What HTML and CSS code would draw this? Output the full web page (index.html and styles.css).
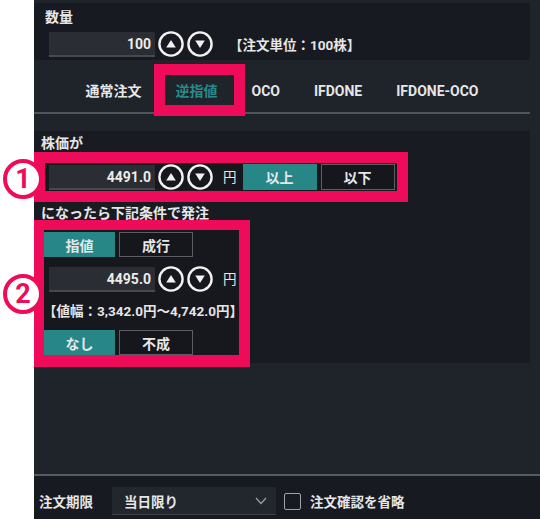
FILE: index.html
```html
<!DOCTYPE html>
<html lang="ja">
<head>
<meta charset="utf-8">
<link rel="stylesheet" href="styles.css">
</head>
<body>
<div class="page">
  <div class="panel">
    <section class="qty">
      <div class="label">数量</div>
      <div class="row qty-row">
        <div class="input">100</div>
        <span class="spin"><svg viewBox="0 0 26 26" width="26" height="26"><circle cx="13" cy="13" r="11.6" fill="none" stroke="#f2f2f2" stroke-width="2.4"/><polygon points="8.2,16.5 17.8,16.5 13,9" fill="#f2f2f2"/></svg></span>
        <span class="spin"><svg viewBox="0 0 26 26" width="26" height="26"><circle cx="13" cy="13" r="11.6" fill="none" stroke="#f2f2f2" stroke-width="2.4"/><polygon points="8.2,9.5 17.8,9.5 13,17" fill="#f2f2f2"/></svg></span>
        <span class="unit">【注文単位：100株】</span>
      </div>
    </section>

    <nav class="tabs">
      <span class="tab">通常注文</span>
      <span class="tab active">逆指値</span>
      <span class="tab">OCO</span>
      <span class="tab">IFDONE</span>
      <span class="tab">IFDONE-OCO</span>
    </nav>

    <section class="cond">
      <div class="label">株価が</div>
      <div class="mark box1">
        <div class="row">
          <div class="input">4491.0</div>
          <span class="spin"><svg viewBox="0 0 26 26" width="26" height="26"><circle cx="13" cy="13" r="11.6" fill="none" stroke="#f2f2f2" stroke-width="2.4"/><polygon points="8.2,16.5 17.8,16.5 13,9" fill="#f2f2f2"/></svg></span>
          <span class="spin"><svg viewBox="0 0 26 26" width="26" height="26"><circle cx="13" cy="13" r="11.6" fill="none" stroke="#f2f2f2" stroke-width="2.4"/><polygon points="8.2,9.5 17.8,9.5 13,17" fill="#f2f2f2"/></svg></span>
          <span class="yen">円</span>
          <span class="btn on wide">以上</span>
          <span class="btn wide">以下</span>
        </div>
      </div>
      <div class="label label2">になったら下記条件で発注</div>
      <div class="mark box2">
        <div class="btns">
          <span class="btn on">指値</span>
          <span class="btn wide">成行</span>
        </div>
        <div class="row price-row">
          <div class="input">4495.0</div>
          <span class="spin"><svg viewBox="0 0 26 26" width="26" height="26"><circle cx="13" cy="13" r="11.6" fill="none" stroke="#f2f2f2" stroke-width="2.4"/><polygon points="8.2,16.5 17.8,16.5 13,9" fill="#f2f2f2"/></svg></span>
          <span class="spin"><svg viewBox="0 0 26 26" width="26" height="26"><circle cx="13" cy="13" r="11.6" fill="none" stroke="#f2f2f2" stroke-width="2.4"/><polygon points="8.2,9.5 17.8,9.5 13,17" fill="#f2f2f2"/></svg></span>
          <span class="yen">円</span>
        </div>
        <div class="range">【値幅：3,342.0円～4,742.0円】</div>
        <div class="btns last">
          <span class="btn on">なし</span>
          <span class="btn wide">不成</span>
        </div>
      </div>
    </section>

    <div class="spacer"></div>

    <footer class="bottom">
      <span class="b-label">注文期限</span>
      <div class="select">
        <span>当日限り</span>
        <svg class="chev" viewBox="0 0 12 8" width="12" height="8"><polyline points="1,1 6,6.5 11,1" fill="none" stroke="#9a9da3" stroke-width="1.3"/></svg>
      </div>
      <span class="check"></span>
      <span class="b-text">注文確認を省略</span>
    </footer>
  </div>

  <span class="num n1">1</span>
  <span class="num n2">2</span>
</div>
</body>
</html>
```

FILE: styles.css
```css
* { box-sizing: border-box; }

html, body {
  margin: 0;
  padding: 0;
  background: #ffffff;
}

body {
  font-family: Roboto, "Noto Sans CJK JP", sans-serif;
  font-weight: 700;
  color: #e6e6e6;
  font-size: 13.5px;
}

.page {
  position: relative;
  width: 540px;
  height: 519px;
  overflow: hidden;
}

.panel {
  margin-left: 34px;
  width: 506px;
  height: 519px;
  background: #1f232a;
  display: flex;
  flex-direction: column;
  padding-top: 3px;
}

.label {
  font-size: 14px;
  line-height: 16px;
  white-space: nowrap;
}

/* quantity */
.qty {
  margin-right: 10px;
  background: #181a21;
  height: 57px;
  padding: 6px 0 0 11px;
}

.row {
  display: flex;
  align-items: center;
}

.qty-row {
  margin-top: 6px;
  padding-left: 4px;
}

.input {
  width: 106px;
  height: 25px;
  background: #2b2d34;
  border-bottom: 2px solid #474950;
  text-align: right;
  font-size: 14px;
  line-height: 24px;
  padding-right: 4px;
  color: #ececec;
}

.spin {
  width: 26px;
  height: 26px;
  margin-left: 3px;
  display: block;
}
.spin + .spin { margin-left: 3px; }
.spin svg { display: block; }

.unit {
  margin-left: 16px;
  font-size: 13.5px;
}

/* tabs */
.tabs {
  margin-right: 10px;
  height: 54px;
  border-bottom: 2px solid #4f535a;
  display: flex;
  justify-content: center;
  align-items: flex-start;
  gap: 34px;
  padding-top: 21px;
}

.tab {
  font-size: 14px;
  line-height: 20px;
  white-space: nowrap;
  position: relative;
}

.tab.active {
  color: #298a8a;
}

.tab.active::after {
  content: "";
  position: absolute;
  top: -17px;
  bottom: -15px;
  left: -21px;
  right: -28px;
  border: 11px solid #ee0c5a;
}

/* condition section */
.cond {
  margin-top: 17px;
  margin-right: 10px;
  background: #191b22;
  padding: 4px 0 0 0;
}

.cond .label {
  padding-left: 7px;
}

.mark {
  border-style: solid;
  border-color: #ee0c5a;
  background: #16181e;
  position: relative;
  z-index: 1;
}

.box1 {
  margin-top: 1px;
  width: 374px;
  height: 50px;
  border-width: 11px;
  display: flex;
  align-items: center;
  padding-left: 4px;
}

.yen {
  margin-left: 10px;
  font-size: 13.5px;
  font-weight: 400;
  line-height: 16px;
}

.btn {
  width: 71px;
  height: 25px;
  display: flex;
  align-items: center;
  justify-content: center;
  font-size: 14px;
  background: #15171d;
  border: 1px solid #5b5e64;
  color: #e6e6e6;
}

.btn.wide { width: 74px; }

.btn.on {
  background: #278686;
  border-color: #278686;
}

.box1 .btn {
  height: 26px;
  margin-left: 4px;
}
.box1 .btn.on { margin-left: 6px; }

.label2 {
  margin-top: 3px;
}

.box2 {
  margin-top: -1px;
  margin-bottom: -4px;
  width: 216px;
  border-width: 10px 11px 12px 10px;
  padding-top: 2px;
}

.btns {
  display: flex;
  gap: 4px;
}

.price-row {
  margin-top: 9px;
  padding-left: 5px;
}

.range {
  margin-top: 11px;
  margin-left: -1px;
  line-height: 16px;
  font-size: 13.5px;
  white-space: nowrap;
}

.btns.last {
  margin-top: 11px;
}

.spacer {
  flex: 1;
}

/* bottom */
.bottom {
  height: 45px;
  border-top: 2px solid #575b61;
  background: #181a21;
  display: flex;
  align-items: center;
  padding: 10px 0 3px 5px;
}

.b-label {
  width: 73px;
  font-size: 13.5px;
}

.select {
  width: 164px;
  height: 28px;
  background: #22262d;
  border-bottom: 1px solid #3b3f46;
  display: flex;
  align-items: center;
  justify-content: space-between;
  padding: 0 9px 0 12px;
  font-size: 13.5px;
}

.chev { display: block; }

.check {
  width: 17px;
  height: 17px;
  margin-left: 8px;
  border: 1.5px solid #9fa2a8;
  border-radius: 2px;
}

.b-text {
  margin-left: 9px;
  font-size: 13.5px;
}

/* annotation numbers */
.num {
  position: absolute;
  left: 3px;
  width: 40px;
  height: 40px;
  border-radius: 50%;
  background: #ffffff;
  border: 4px solid #ee0c5a;
  color: #ee0c5a;
  font-family: Roboto, "Noto Sans", sans-serif;
  font-weight: 700;
  font-size: 27px;
  line-height: 32px;
  text-align: center;
  z-index: 3;
}

.n1 { top: 159px; }
.n2 { top: 274px; }
```
